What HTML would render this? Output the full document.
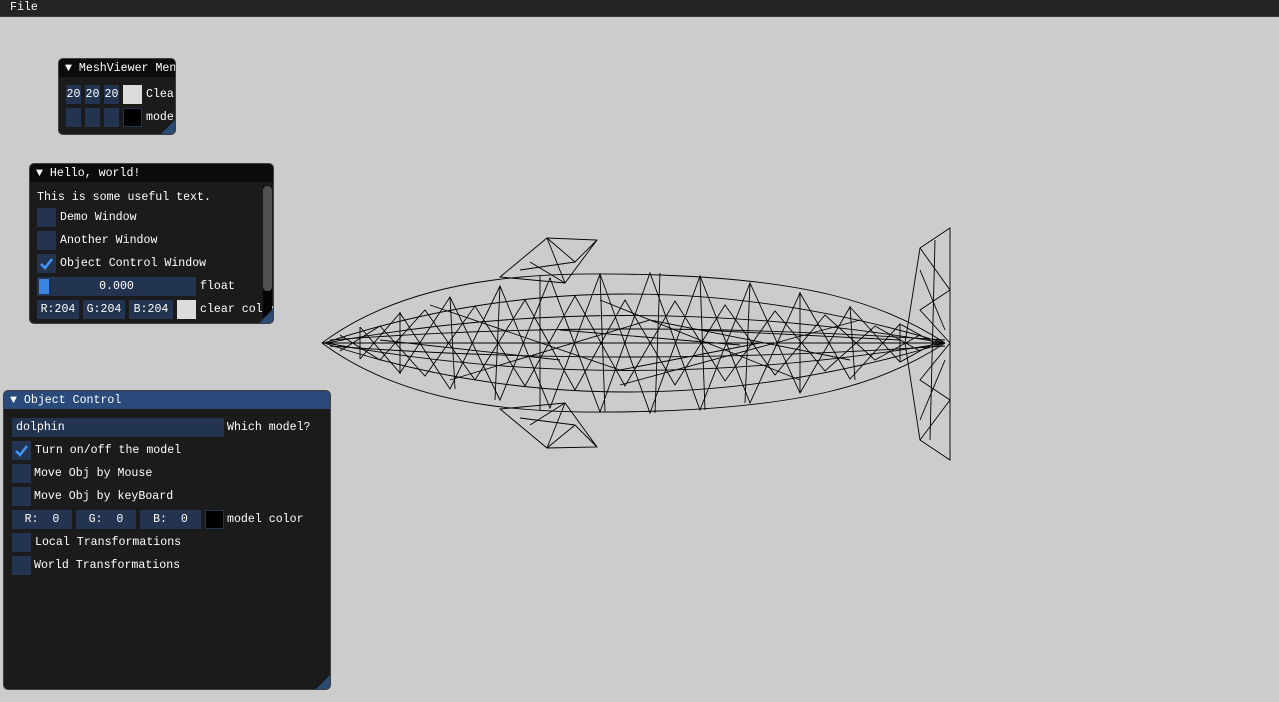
<!DOCTYPE html>
<html><head><style>
body{margin:0;width:1279px;height:702px;background:#cccccc;position:relative;overflow:hidden;font-family:"Liberation Mono","DejaVu Sans Mono",monospace;font-size:11.6px;color:#fff}
.abs{position:absolute}
.menubar{left:0;top:0;width:1279px;height:16px;background:#232323;border-bottom:1px solid #3a3a3a}
.win{position:absolute;background:#1b1b1b;border:1px solid #3d3d44;border-radius:5px;overflow:hidden}
.title{position:absolute;left:0;top:0;right:0;height:18px;background:#0b0b0b;line-height:19px;white-space:nowrap}
.title.act{background:#294a7a}
.f{position:absolute;background:#22344f;height:19px;line-height:19px;text-align:center;white-space:pre}
.t{position:absolute;line-height:19px;white-space:nowrap}
.grip{position:absolute;right:0;bottom:0;width:0;height:0;border-left:14px solid transparent;border-bottom:14px solid #2a4a72}
.chk{position:absolute;background:#22344f;width:19px;height:19px}
</style></head><body>
<div class="abs menubar"><span class="abs" style="left:10px;top:0;line-height:16px">File</span></div>

<div class="win" style="left:58px;top:58px;width:116px;height:75px">
<div class="title"><span style="margin-left:6px">▼ MeshViewer Menu</span></div>
<div class="f" style="left:7px;top:26px;width:15px">20</div>
<div class="f" style="left:26px;top:26px;width:15px">20</div>
<div class="f" style="left:45px;top:26px;width:15px">20</div>
<div class="f" style="left:64px;top:26px;width:19px;background:#dcdcdc"></div>
<div class="t" style="left:87px;top:26px">Clear</div>
<div class="f" style="left:7px;top:49px;width:15px"></div>
<div class="f" style="left:26px;top:49px;width:15px"></div>
<div class="f" style="left:45px;top:49px;width:15px"></div>
<div class="f" style="left:64px;top:49px;width:17px;height:17px;background:#000;border:1px solid #22344f"></div>
<div class="t" style="left:87px;top:49px">model</div>
<div class="grip"></div>
</div>

<div class="win" style="left:29px;top:163px;width:243px;height:159px">
<div class="title"><span style="margin-left:6px">▼ Hello, world!</span></div>
<div class="t" style="left:7px;top:24px">This is some useful text.</div>
<div class="chk" style="left:7px;top:44px"></div><div class="t" style="left:30px;top:44px">Demo Window</div>
<div class="chk" style="left:7px;top:67px"></div><div class="t" style="left:30px;top:67px">Another Window</div>
<div class="chk" style="left:7px;top:90px"><svg width="19" height="19"><path d="M4 10 L8 14 L15 5" stroke="#4296fa" stroke-width="2.5" fill="none"/></svg></div><div class="t" style="left:30px;top:90px">Object Control Window</div>
<div class="f" style="left:7px;top:113px;width:159px">0.000</div>
<div class="abs" style="left:9px;top:115px;width:10px;height:15px;background:#3d85e0"></div>
<div class="t" style="left:170px;top:113px">float</div>
<div class="f" style="left:7px;top:136px;width:42px">R:204</div>
<div class="f" style="left:53px;top:136px;width:42px">G:204</div>
<div class="f" style="left:99px;top:136px;width:44px">B:204</div>
<div class="f" style="left:147px;top:136px;width:19px;background:#dcdcdc"></div>
<div class="t" style="left:170px;top:136px">clear color</div>
<div class="abs" style="left:233px;top:22px;width:9px;height:136px;background:#050505"></div>
<div class="abs" style="left:233px;top:22px;width:9px;height:105px;background:#505050;border-radius:4px"></div>
<div class="grip"></div>
</div>

<div class="win" style="left:3px;top:390px;width:326px;height:298px">
<div class="title act"><span style="margin-left:6px">▼ Object Control</span></div>
<div class="f" style="left:8px;top:27px;width:212px;text-align:left;padding-left:4px;box-sizing:border-box">dolphin</div>
<div class="t" style="left:223px;top:27px">Which model?</div>
<div class="chk" style="left:8px;top:50px"><svg width="19" height="19"><path d="M4 10 L8 14 L15 5" stroke="#4296fa" stroke-width="2.5" fill="none"/></svg></div><div class="t" style="left:31px;top:50px">Turn on/off the model</div>
<div class="chk" style="left:8px;top:73px"></div><div class="t" style="left:30px;top:73px">Move Obj by Mouse</div>
<div class="chk" style="left:8px;top:96px"></div><div class="t" style="left:30px;top:96px">Move Obj by keyBoard</div>
<div class="f" style="left:8px;top:119px;width:60px">R:  0</div>
<div class="f" style="left:72px;top:119px;width:60px">G:  0</div>
<div class="f" style="left:136px;top:119px;width:61px">B:  0</div>
<div class="f" style="left:201px;top:119px;width:17px;height:17px;background:#000;border:1px solid #22344f"></div>
<div class="t" style="left:223px;top:119px">model color</div>
<div class="chk" style="left:8px;top:142px"></div><div class="t" style="left:31px;top:142px">Local Transformations</div>
<div class="chk" style="left:8px;top:165px"></div><div class="t" style="left:30px;top:165px">World Transformations</div>
<div class="grip"></div>
</div>

<svg class="abs" style="left:0;top:0" width="1279" height="702" fill="none" stroke="#000" stroke-width="0.9">
<path d="M500,277 L547,238 L597,240 L565,283 Z M547,238 L565,283 M547,238 L575,262 L597,240 M530,262 L565,283 M520,270 L575,262"/>
<path d="M500,409 L547,448 L597,447 L565,403 Z M547,448 L565,403 M547,448 L575,425 L597,447 M530,425 L565,403 M520,418 L575,425"/>
<path d="M905,343 L920,248 L950,228 L950,460 L920,440 Z M920,248 L950,290 L920,310 L950,343 L920,380 L950,400 L920,440 M920,270 L945,330 M920,420 L945,360 M935,240 L930,440"/>
<path d="M322,343 C420,270 560,272 660,275 C800,280 880,300 945,343"/>
<path d="M322,343 C420,416 560,414 660,411 C800,406 880,386 945,343"/>
<path d="M324,343 Q620,245 945,343"/>
<path d="M324,343 Q620,441 945,343"/>
<path d="M326,343 Q620,288 945,343"/>
<path d="M326,343 Q620,398 945,343"/>
<path d="M322,343 L945,343"/>
<path d="M330,340 Q620,318 945,340 M330,346 Q620,368 945,346"/>
<path d="M360,327 L400,373 L450,297 L500,400 L550,278 L600,412 L650,273 L700,410 L750,283 L800,393 L850,307 L900,362 L940,340"/>
<path d="M360,359 L400,313 L450,389 L500,286 L550,408 L600,274 L650,413 L700,276 L750,403 L800,293 L850,379 L900,324 L940,346"/>
<path d="M340,335 L380,360 L425,310 L475,380 L525,300 L575,390 L625,300 L675,385 L725,305 L775,375 L825,315 L875,360 L920,335"/>
<path d="M340,351 L380,326 L425,376 L475,306 L525,386 L575,296 L625,386 L675,301 L725,381 L775,311 L825,371 L875,326 L920,351"/>
<path d="M400,312 L400,374 M450,297 L455,389 M500,286 L495,400 M540,276 L540,410 M600,274 L605,412 M660,273 L655,413 M700,276 L705,410 M750,283 L745,403 M800,292 L800,393 M850,306 L855,380 M900,324 L900,362 M360,327 L360,359"/>
<path d="M430,305 L620,370 L760,343 M560,330 L740,345 M450,380 L650,320 L850,360 M700,330 L900,340 M380,340 L560,360 M600,300 L800,380 M620,385 L860,320"/>
</svg>
</body></html>
